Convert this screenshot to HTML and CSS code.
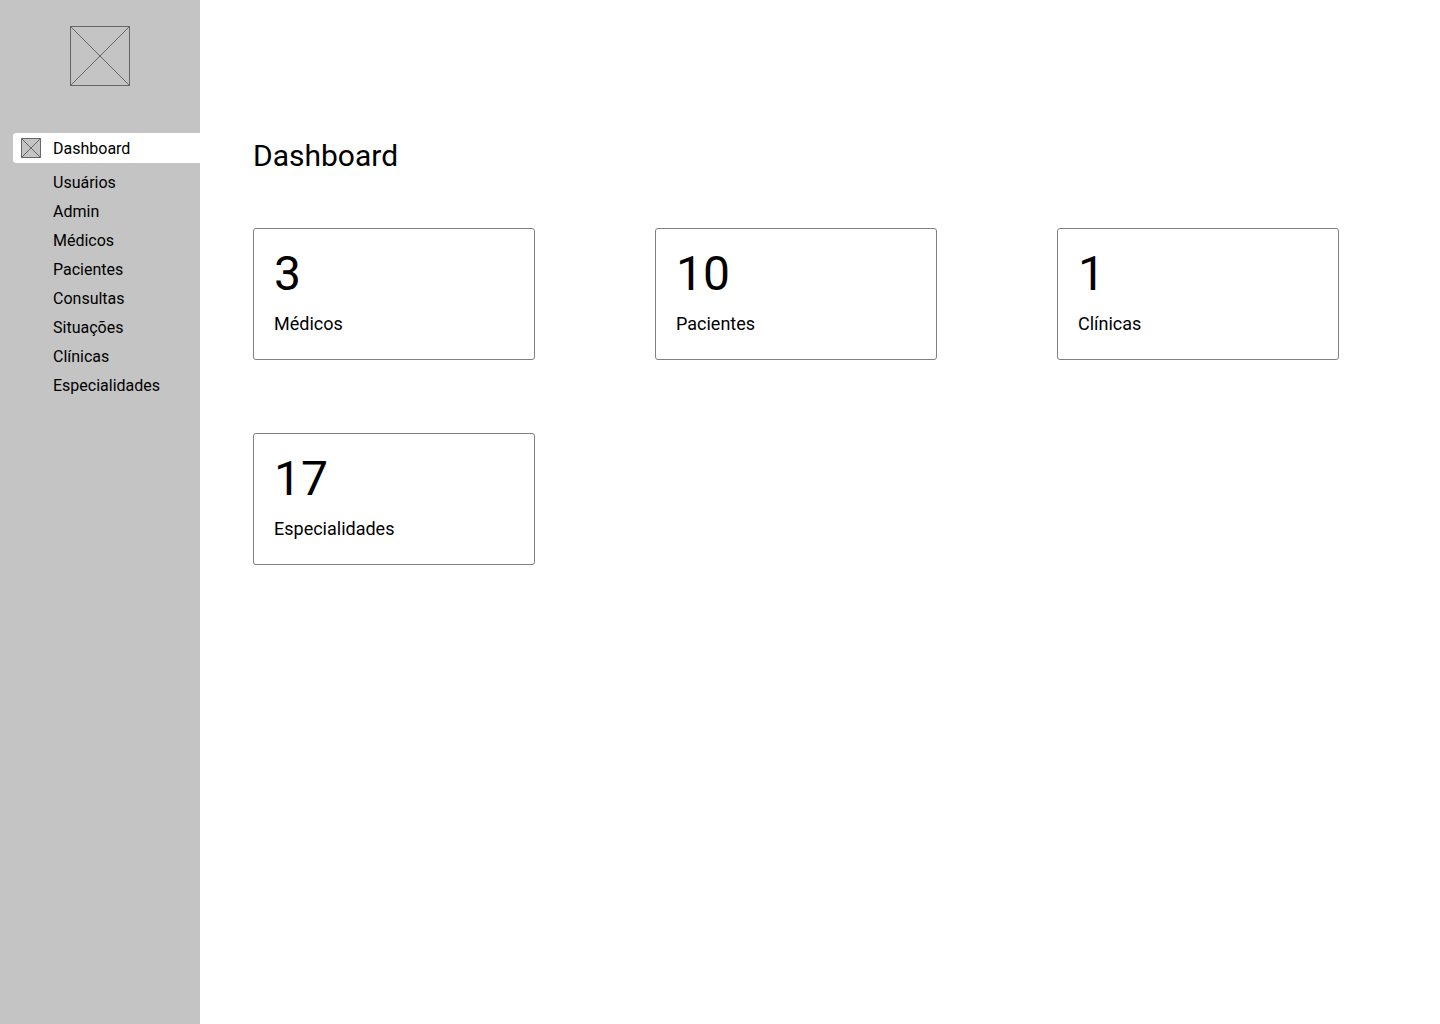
FILE: index.html
```html
<!DOCTYPE html>
<html lang="pt-BR">
<head>
<meta charset="utf-8">
<title>Dashboard</title>
<link rel="stylesheet" href="styles.css">
</head>
<body>
<aside class="sidebar">
  <svg class="logo" viewBox="0 0 60 60"><path d="M.5.5h59v59H.5z"/><path d="M.35.35l59.3 59.3M59.65.35l-59.3 59.3"/></svg>
  <nav class="nav">
    <a class="nav-item active"><svg class="icon" viewBox="0 0 20 20"><path d="M.5.5h19v19H.5z"/><path d="M.35.35l19.3 19.3M19.65.35l-19.3 19.3"/></svg>Dashboard</a>
    <a class="nav-item">Usuários</a>
    <a class="nav-item">Admin</a>
    <a class="nav-item">Médicos</a>
    <a class="nav-item">Pacientes</a>
    <a class="nav-item">Consultas</a>
    <a class="nav-item">Situações</a>
    <a class="nav-item">Clínicas</a>
    <a class="nav-item">Especialidades</a>
  </nav>
</aside>
<main class="main">
  <h1 class="title">Dashboard</h1>
  <section class="cards">
    <article class="card"><div class="count">3</div><div class="label">Médicos</div></article>
    <article class="card"><div class="count">10</div><div class="label">Pacientes</div></article>
    <article class="card"><div class="count">1</div><div class="label">Clínicas</div></article>
    <article class="card"><div class="count">17</div><div class="label">Especialidades</div></article>
  </section>
</main>
</body>
</html>
```
FILE: styles.css
```css
* { box-sizing: border-box; }
body {
  margin: 0;
  display: flex;
  min-height: 1024px;
  background: #fff;
  color: #000;
  font-family: Roboto, sans-serif;
}
.sidebar {
  width: 200px;
  flex: none;
  background: #c4c4c4;
  padding-top: 26px;
}
.logo, .icon {
  display: block;
  flex: none;
  fill: #c4c4c4;
  stroke: #666;
  stroke-width: 1;
}
.logo { width: 60px; height: 60px; margin: 0 auto 47px; }
.icon { width: 20px; height: 20px; margin-right: 12px; }
.nav { display: flex; flex-direction: column; padding-left: 13px; }
.nav-item {
  display: flex;
  align-items: center;
  height: 29px;
  padding-left: 40px;
  font-size: 16px;
  line-height: 19px;
}
.nav-item.active {
  height: 30px;
  margin-bottom: 5px;
  padding-left: 8px;
  background: #fff;
  border-radius: 3px 0 0 3px;
}
.main { flex: 1; padding: 138px 0 0 53px; }
.title { margin: 0 0 55px; font-size: 30px; font-weight: 400; line-height: 35px; }
.cards {
  display: grid;
  grid-template-columns: repeat(3, 282px);
  gap: 73px 120px;
}
.card {
  height: 132px;
  padding: 17px 20px;
  border: 1px solid #808080;
  border-radius: 3px;
}
.count { font-size: 48px; line-height: 56px; }
.label { margin-top: 11px; font-size: 18px; line-height: 21px; }
```
